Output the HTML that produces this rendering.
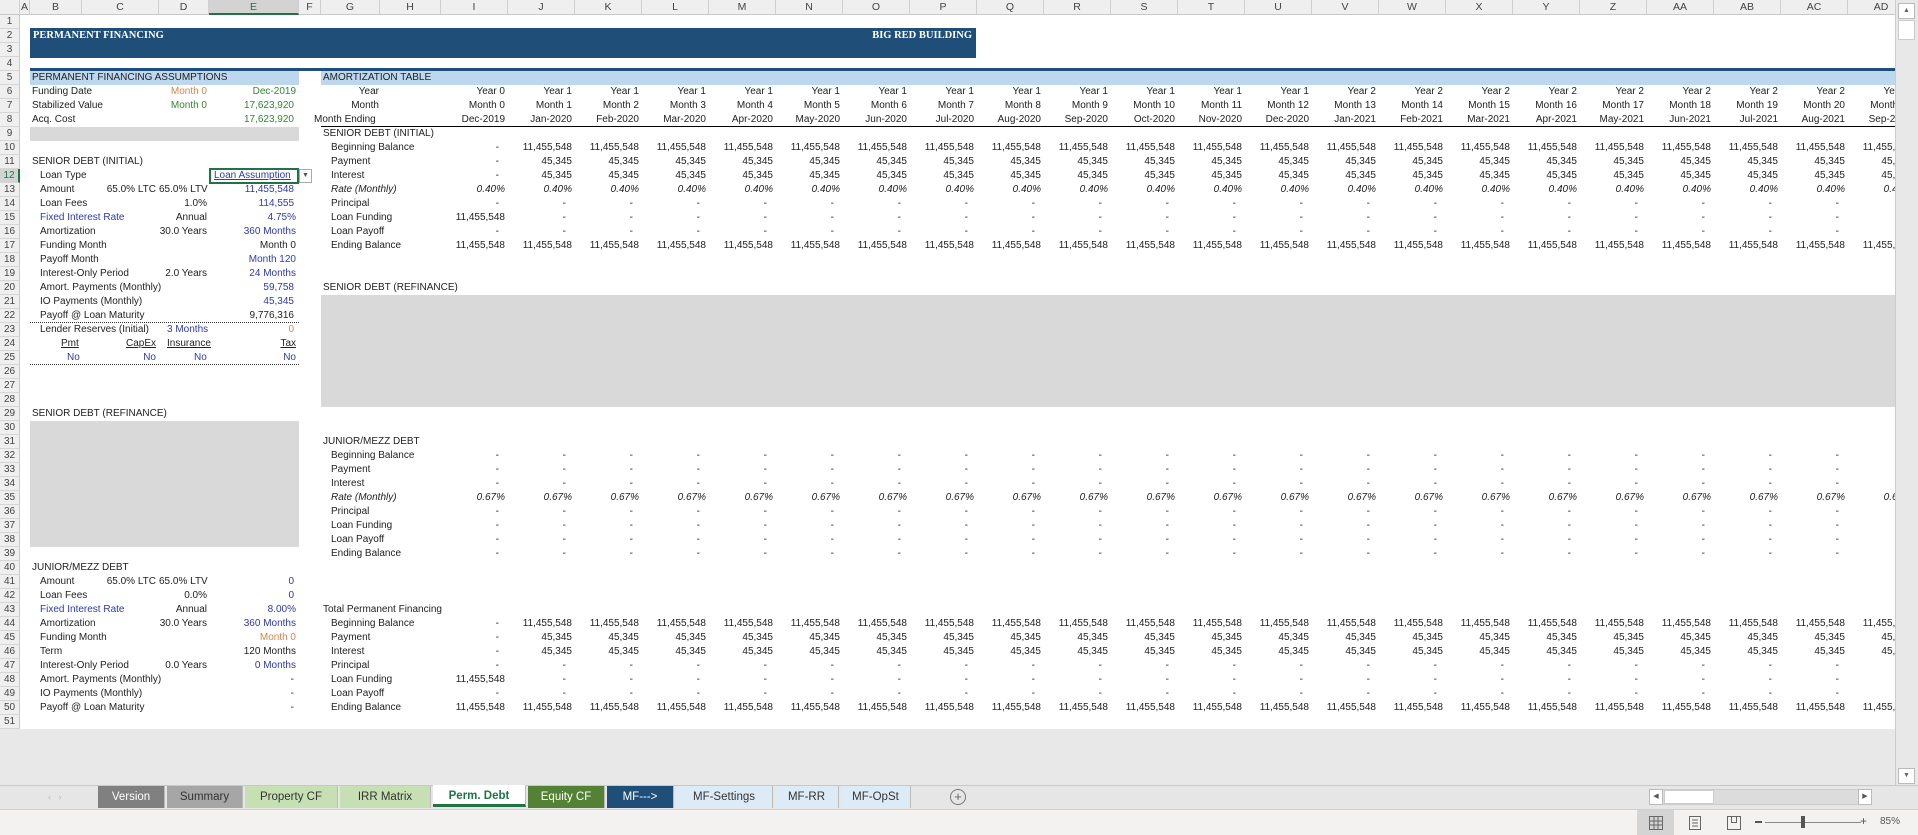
<!DOCTYPE html>
<html><head><meta charset="utf-8"><style>
*{margin:0;padding:0;box-sizing:border-box}
body{width:1918px;height:835px;overflow:hidden;background:#fff;font-family:"Liberation Sans",sans-serif;font-size:10px;color:#222;position:relative}
.a{position:absolute;white-space:nowrap;line-height:14px;height:14px}
.r{text-align:right}
.bl{color:#2e3ba8}.gr{color:#2f8a2f}.or{color:#d4884a}
.hdr{position:absolute;top:0;left:0;width:1897px;height:15px;background:#efefef;border-bottom:1px solid #c8c8c8}
.hdr div{position:absolute;top:0;height:15px;line-height:15px;text-align:center;color:#444;border-right:1px solid #d0d0d0;font-size:10.5px}
.rn{position:absolute;left:0;width:20px;height:14px;line-height:14px;text-align:center;background:#efefef;border-bottom:1px solid #d6d6d6;border-right:1px solid #c8c8c8;color:#444;font-size:10px}
table{position:absolute;left:321px;top:85px;border-collapse:collapse;table-layout:fixed;width:1594px}
tr{height:14px}
td{height:14px;line-height:14px;padding:0 3px 0 0;text-align:right;white-space:nowrap;overflow:hidden;font-size:10px}
td.l{text-align:left;padding-left:10px}
td.s{text-align:left;padding-left:2px}
td.d{padding-right:9px}
td i{font-style:italic}
.wrap{position:absolute;left:0;top:0;width:1895px;height:729px;overflow:hidden}
.tab{position:absolute;top:786px;height:22px;line-height:22px;text-align:center;font-size:11.5px;border-right:1px solid #bbb}
</style></head><body>
<div class="wrap">
<div style="position:absolute;left:30px;top:28px;width:946px;height:30px;background:#1f4e79"></div>
<div class="a" style="left:33px;top:29px;color:#fff;font-family:'Liberation Serif',serif;font-weight:bold;font-size:10.5px">PERMANENT FINANCING</div>
<div class="a r" style="left:700px;width:272px;top:29px;color:#fff;font-family:'Liberation Serif',serif;font-weight:bold;font-size:10.5px">BIG RED BUILDING</div>
<div style="position:absolute;left:30px;top:68px;width:1865px;height:3px;background:#1f4e79"></div>
<div style="position:absolute;left:30px;top:71px;width:269px;height:14px;background:#bdd7ee"></div>
<div style="position:absolute;left:321px;top:71px;width:1574px;height:14px;background:#bdd7ee"></div>
<div class="a" style="left:32px;top:71px">PERMANENT FINANCING ASSUMPTIONS</div>
<div class="a" style="left:323px;top:71px">AMORTIZATION TABLE</div>
<div style="position:absolute;left:30px;top:127px;width:269px;height:14px;background:#d9d9d9"></div>
<div style="position:absolute;left:30px;top:421px;width:269px;height:126px;background:#d9d9d9"></div>
<div style="position:absolute;left:321px;top:295px;width:1574px;height:112px;background:#d9d9d9"></div>
<div style="position:absolute;left:321px;top:126px;width:1574px;height:1px;background:#000"></div>
<div style="position:absolute;left:30px;top:322px;width:269px;border-top:1px dotted #333"></div>
<div style="position:absolute;left:30px;top:364px;width:269px;border-top:1px dotted #333"></div>

<div class="a" style="left:32px;top:85px">Funding Date</div><div class="a r or" style="left:159px;width:48px;top:85px">Month 0</div><div class="a r gr" style="left:209px;width:87px;top:85px">Dec-2019</div>
<div class="a" style="left:32px;top:99px">Stabilized Value</div><div class="a r gr" style="left:159px;width:48px;top:99px">Month 0</div><div class="a r gr" style="left:209px;width:85px;top:99px">17,623,920</div>
<div class="a" style="left:32px;top:113px">Acq. Cost</div><div class="a r gr" style="left:209px;width:85px;top:113px">17,623,920</div>

<div class="a" style="left:32px;top:155px">SENIOR DEBT (INITIAL)</div>
<div class="a" style="left:40px;top:169px">Loan Type</div>
<div style="position:absolute;left:209px;top:168px;width:90px;height:16px;border:2px solid #217346"></div>
<div class="a bl" style="left:214px;top:169px;text-decoration:underline">Loan Assumption</div>
<div style="position:absolute;left:299px;top:169px;width:13px;height:14px;border:1px solid #aaa;background:#fff;font-size:7px;text-align:center;line-height:12px;color:#555">▼</div>
<div class="a" style="left:40px;top:183px">Amount</div><div class="a r" style="left:82px;width:74px;top:183px">65.0% LTC</div><div class="a r" style="left:159px;width:48px;top:183px">65.0% LTV</div><div class="a r bl" style="left:209px;width:85px;top:183px">11,455,548</div>
<div class="a" style="left:40px;top:197px">Loan Fees</div><div class="a r" style="left:159px;width:48px;top:197px">1.0%</div><div class="a r bl" style="left:209px;width:85px;top:197px">114,555</div>
<div class="a bl" style="left:40px;top:211px">Fixed Interest Rate</div><div class="a r" style="left:159px;width:48px;top:211px">Annual</div><div class="a r bl" style="left:209px;width:87px;top:211px">4.75%</div>
<div class="a" style="left:40px;top:225px">Amortization</div><div class="a r" style="left:150px;width:57px;top:225px">30.0 Years</div><div class="a r bl" style="left:209px;width:87px;top:225px">360 Months</div>
<div class="a" style="left:40px;top:239px">Funding Month</div><div class="a r" style="left:209px;width:87px;top:239px">Month 0</div>
<div class="a" style="left:40px;top:253px">Payoff Month</div><div class="a r bl" style="left:209px;width:87px;top:253px">Month 120</div>
<div class="a" style="left:40px;top:267px">Interest-Only Period</div><div class="a r" style="left:150px;width:57px;top:267px">2.0 Years</div><div class="a r bl" style="left:209px;width:87px;top:267px">24 Months</div>
<div class="a" style="left:40px;top:281px">Amort. Payments (Monthly)</div><div class="a r bl" style="left:209px;width:85px;top:281px">59,758</div>
<div class="a" style="left:40px;top:295px">IO Payments (Monthly)</div><div class="a r bl" style="left:209px;width:85px;top:295px">45,345</div>
<div class="a" style="left:40px;top:309px">Payoff @ Loan Maturity</div><div class="a r" style="left:209px;width:85px;top:309px">9,776,316</div>
<div class="a" style="left:40px;top:323px">Lender Reserves (Initial)</div><div class="a bl" style="left:167px;top:323px">3 Months</div><div class="a r or" style="left:209px;width:85px;top:323px">0</div>
<div class="a" style="left:61px;top:337px;text-decoration:underline">Pmt</div><div class="a r" style="left:82px;width:74px;top:337px;text-decoration:underline">CapEx</div><div class="a" style="left:167px;top:337px;text-decoration:underline">Insurance</div><div class="a r" style="left:209px;width:87px;top:337px;text-decoration:underline">Tax</div>
<div class="a bl" style="left:67px;top:351px">No</div><div class="a r bl" style="left:82px;width:74px;top:351px">No</div><div class="a bl" style="left:194px;top:351px">No</div><div class="a r bl" style="left:209px;width:87px;top:351px">No</div>

<div class="a" style="left:32px;top:407px">SENIOR DEBT (REFINANCE)</div>

<div class="a" style="left:32px;top:561px">JUNIOR/MEZZ DEBT</div>
<div class="a" style="left:40px;top:575px">Amount</div><div class="a r" style="left:82px;width:74px;top:575px">65.0% LTC</div><div class="a r" style="left:159px;width:48px;top:575px">65.0% LTV</div><div class="a r bl" style="left:209px;width:85px;top:575px">0</div>
<div class="a" style="left:40px;top:589px">Loan Fees</div><div class="a r" style="left:159px;width:48px;top:589px">0.0%</div><div class="a r bl" style="left:209px;width:85px;top:589px">0</div>
<div class="a bl" style="left:40px;top:603px">Fixed Interest Rate</div><div class="a r" style="left:159px;width:48px;top:603px">Annual</div><div class="a r bl" style="left:209px;width:87px;top:603px">8.00%</div>
<div class="a" style="left:40px;top:617px">Amortization</div><div class="a r" style="left:150px;width:57px;top:617px">30.0 Years</div><div class="a r bl" style="left:209px;width:87px;top:617px">360 Months</div>
<div class="a" style="left:40px;top:631px">Funding Month</div><div class="a r or" style="left:209px;width:87px;top:631px">Month 0</div>
<div class="a" style="left:40px;top:645px">Term</div><div class="a r" style="left:209px;width:87px;top:645px">120 Months</div>
<div class="a" style="left:40px;top:659px">Interest-Only Period</div><div class="a r" style="left:150px;width:57px;top:659px">0.0 Years</div><div class="a r bl" style="left:209px;width:87px;top:659px">0 Months</div>
<div class="a" style="left:40px;top:673px">Amort. Payments (Monthly)</div><div class="a r" style="left:209px;width:85px;top:673px">-</div>
<div class="a" style="left:40px;top:687px">IO Payments (Monthly)</div><div class="a r" style="left:209px;width:85px;top:687px">-</div>
<div class="a" style="left:40px;top:701px">Payoff @ Loan Maturity</div><div class="a r" style="left:209px;width:85px;top:701px">-</div>

<table>
<colgroup><col style="width:120px"><col span="22" style="width:67px"></colgroup>
<tr><td style="padding-right:62px">Year</td><td>Year 0</td><td>Year 1</td><td>Year 1</td><td>Year 1</td><td>Year 1</td><td>Year 1</td><td>Year 1</td><td>Year 1</td><td>Year 1</td><td>Year 1</td><td>Year 1</td><td>Year 1</td><td>Year 1</td><td>Year 2</td><td>Year 2</td><td>Year 2</td><td>Year 2</td><td>Year 2</td><td>Year 2</td><td>Year 2</td><td>Year 2</td><td>Year 2</td></tr>
<tr><td style="padding-right:62px">Month</td><td>Month 0</td><td>Month 1</td><td>Month 2</td><td>Month 3</td><td>Month 4</td><td>Month 5</td><td>Month 6</td><td>Month 7</td><td>Month 8</td><td>Month 9</td><td>Month 10</td><td>Month 11</td><td>Month 12</td><td>Month 13</td><td>Month 14</td><td>Month 15</td><td>Month 16</td><td>Month 17</td><td>Month 18</td><td>Month 19</td><td>Month 20</td><td>Month 21</td></tr>
<tr><td style="text-align:left;padding-left:0;overflow:visible">&#8203;<span style="position:relative;left:-7px">Month Ending</span></td><td>Dec-2019</td><td>Jan-2020</td><td>Feb-2020</td><td>Mar-2020</td><td>Apr-2020</td><td>May-2020</td><td>Jun-2020</td><td>Jul-2020</td><td>Aug-2020</td><td>Sep-2020</td><td>Oct-2020</td><td>Nov-2020</td><td>Dec-2020</td><td>Jan-2021</td><td>Feb-2021</td><td>Mar-2021</td><td>Apr-2021</td><td>May-2021</td><td>Jun-2021</td><td>Jul-2021</td><td>Aug-2021</td><td>Sep-2021</td></tr>
<tr><td class="s">SENIOR DEBT (INITIAL)</td><td colspan="22"></td></tr>
<tr><td class="l">Beginning Balance</td><td class="d">-</td><td>11,455,548</td><td>11,455,548</td><td>11,455,548</td><td>11,455,548</td><td>11,455,548</td><td>11,455,548</td><td>11,455,548</td><td>11,455,548</td><td>11,455,548</td><td>11,455,548</td><td>11,455,548</td><td>11,455,548</td><td>11,455,548</td><td>11,455,548</td><td>11,455,548</td><td>11,455,548</td><td>11,455,548</td><td>11,455,548</td><td>11,455,548</td><td>11,455,548</td><td>11,455,548</td></tr>
<tr><td class="l">Payment</td><td class="d">-</td><td>45,345</td><td>45,345</td><td>45,345</td><td>45,345</td><td>45,345</td><td>45,345</td><td>45,345</td><td>45,345</td><td>45,345</td><td>45,345</td><td>45,345</td><td>45,345</td><td>45,345</td><td>45,345</td><td>45,345</td><td>45,345</td><td>45,345</td><td>45,345</td><td>45,345</td><td>45,345</td><td>45,345</td></tr>
<tr><td class="l">Interest</td><td class="d">-</td><td>45,345</td><td>45,345</td><td>45,345</td><td>45,345</td><td>45,345</td><td>45,345</td><td>45,345</td><td>45,345</td><td>45,345</td><td>45,345</td><td>45,345</td><td>45,345</td><td>45,345</td><td>45,345</td><td>45,345</td><td>45,345</td><td>45,345</td><td>45,345</td><td>45,345</td><td>45,345</td><td>45,345</td></tr>
<tr><td class="l"><i>Rate (Monthly)</i></td><td><i>0.40%</i></td><td><i>0.40%</i></td><td><i>0.40%</i></td><td><i>0.40%</i></td><td><i>0.40%</i></td><td><i>0.40%</i></td><td><i>0.40%</i></td><td><i>0.40%</i></td><td><i>0.40%</i></td><td><i>0.40%</i></td><td><i>0.40%</i></td><td><i>0.40%</i></td><td><i>0.40%</i></td><td><i>0.40%</i></td><td><i>0.40%</i></td><td><i>0.40%</i></td><td><i>0.40%</i></td><td><i>0.40%</i></td><td><i>0.40%</i></td><td><i>0.40%</i></td><td><i>0.40%</i></td><td><i>0.40%</i></td></tr>
<tr><td class="l">Principal</td><td class="d">-</td><td class="d">-</td><td class="d">-</td><td class="d">-</td><td class="d">-</td><td class="d">-</td><td class="d">-</td><td class="d">-</td><td class="d">-</td><td class="d">-</td><td class="d">-</td><td class="d">-</td><td class="d">-</td><td class="d">-</td><td class="d">-</td><td class="d">-</td><td class="d">-</td><td class="d">-</td><td class="d">-</td><td class="d">-</td><td class="d">-</td><td class="d">-</td></tr>
<tr><td class="l">Loan Funding</td><td>11,455,548</td><td class="d">-</td><td class="d">-</td><td class="d">-</td><td class="d">-</td><td class="d">-</td><td class="d">-</td><td class="d">-</td><td class="d">-</td><td class="d">-</td><td class="d">-</td><td class="d">-</td><td class="d">-</td><td class="d">-</td><td class="d">-</td><td class="d">-</td><td class="d">-</td><td class="d">-</td><td class="d">-</td><td class="d">-</td><td class="d">-</td><td class="d">-</td></tr>
<tr><td class="l">Loan Payoff</td><td class="d">-</td><td class="d">-</td><td class="d">-</td><td class="d">-</td><td class="d">-</td><td class="d">-</td><td class="d">-</td><td class="d">-</td><td class="d">-</td><td class="d">-</td><td class="d">-</td><td class="d">-</td><td class="d">-</td><td class="d">-</td><td class="d">-</td><td class="d">-</td><td class="d">-</td><td class="d">-</td><td class="d">-</td><td class="d">-</td><td class="d">-</td><td class="d">-</td></tr>
<tr><td class="l">Ending Balance</td><td>11,455,548</td><td>11,455,548</td><td>11,455,548</td><td>11,455,548</td><td>11,455,548</td><td>11,455,548</td><td>11,455,548</td><td>11,455,548</td><td>11,455,548</td><td>11,455,548</td><td>11,455,548</td><td>11,455,548</td><td>11,455,548</td><td>11,455,548</td><td>11,455,548</td><td>11,455,548</td><td>11,455,548</td><td>11,455,548</td><td>11,455,548</td><td>11,455,548</td><td>11,455,548</td><td>11,455,548</td></tr>
<tr><td colspan="23">&nbsp;</td></tr>
<tr><td colspan="23">&nbsp;</td></tr>
<tr><td class="s" colspan="3">SENIOR DEBT (REFINANCE)</td><td colspan="20"></td></tr>
<tr><td colspan="23">&nbsp;</td></tr><tr><td colspan="23">&nbsp;</td></tr><tr><td colspan="23">&nbsp;</td></tr><tr><td colspan="23">&nbsp;</td></tr><tr><td colspan="23">&nbsp;</td></tr><tr><td colspan="23">&nbsp;</td></tr><tr><td colspan="23">&nbsp;</td></tr><tr><td colspan="23">&nbsp;</td></tr>
<tr><td colspan="23">&nbsp;</td></tr><tr><td colspan="23">&nbsp;</td></tr>
<tr><td class="s">JUNIOR/MEZZ DEBT</td><td colspan="22"></td></tr>
<tr><td class="l">Beginning Balance</td><td class="d">-</td><td class="d">-</td><td class="d">-</td><td class="d">-</td><td class="d">-</td><td class="d">-</td><td class="d">-</td><td class="d">-</td><td class="d">-</td><td class="d">-</td><td class="d">-</td><td class="d">-</td><td class="d">-</td><td class="d">-</td><td class="d">-</td><td class="d">-</td><td class="d">-</td><td class="d">-</td><td class="d">-</td><td class="d">-</td><td class="d">-</td><td class="d">-</td></tr>
<tr><td class="l">Payment</td><td class="d">-</td><td class="d">-</td><td class="d">-</td><td class="d">-</td><td class="d">-</td><td class="d">-</td><td class="d">-</td><td class="d">-</td><td class="d">-</td><td class="d">-</td><td class="d">-</td><td class="d">-</td><td class="d">-</td><td class="d">-</td><td class="d">-</td><td class="d">-</td><td class="d">-</td><td class="d">-</td><td class="d">-</td><td class="d">-</td><td class="d">-</td><td class="d">-</td></tr>
<tr><td class="l">Interest</td><td class="d">-</td><td class="d">-</td><td class="d">-</td><td class="d">-</td><td class="d">-</td><td class="d">-</td><td class="d">-</td><td class="d">-</td><td class="d">-</td><td class="d">-</td><td class="d">-</td><td class="d">-</td><td class="d">-</td><td class="d">-</td><td class="d">-</td><td class="d">-</td><td class="d">-</td><td class="d">-</td><td class="d">-</td><td class="d">-</td><td class="d">-</td><td class="d">-</td></tr>
<tr><td class="l"><i>Rate (Monthly)</i></td><td><i>0.67%</i></td><td><i>0.67%</i></td><td><i>0.67%</i></td><td><i>0.67%</i></td><td><i>0.67%</i></td><td><i>0.67%</i></td><td><i>0.67%</i></td><td><i>0.67%</i></td><td><i>0.67%</i></td><td><i>0.67%</i></td><td><i>0.67%</i></td><td><i>0.67%</i></td><td><i>0.67%</i></td><td><i>0.67%</i></td><td><i>0.67%</i></td><td><i>0.67%</i></td><td><i>0.67%</i></td><td><i>0.67%</i></td><td><i>0.67%</i></td><td><i>0.67%</i></td><td><i>0.67%</i></td><td><i>0.67%</i></td></tr>
<tr><td class="l">Principal</td><td class="d">-</td><td class="d">-</td><td class="d">-</td><td class="d">-</td><td class="d">-</td><td class="d">-</td><td class="d">-</td><td class="d">-</td><td class="d">-</td><td class="d">-</td><td class="d">-</td><td class="d">-</td><td class="d">-</td><td class="d">-</td><td class="d">-</td><td class="d">-</td><td class="d">-</td><td class="d">-</td><td class="d">-</td><td class="d">-</td><td class="d">-</td><td class="d">-</td></tr>
<tr><td class="l">Loan Funding</td><td class="d">-</td><td class="d">-</td><td class="d">-</td><td class="d">-</td><td class="d">-</td><td class="d">-</td><td class="d">-</td><td class="d">-</td><td class="d">-</td><td class="d">-</td><td class="d">-</td><td class="d">-</td><td class="d">-</td><td class="d">-</td><td class="d">-</td><td class="d">-</td><td class="d">-</td><td class="d">-</td><td class="d">-</td><td class="d">-</td><td class="d">-</td><td class="d">-</td></tr>
<tr><td class="l">Loan Payoff</td><td class="d">-</td><td class="d">-</td><td class="d">-</td><td class="d">-</td><td class="d">-</td><td class="d">-</td><td class="d">-</td><td class="d">-</td><td class="d">-</td><td class="d">-</td><td class="d">-</td><td class="d">-</td><td class="d">-</td><td class="d">-</td><td class="d">-</td><td class="d">-</td><td class="d">-</td><td class="d">-</td><td class="d">-</td><td class="d">-</td><td class="d">-</td><td class="d">-</td></tr>
<tr><td class="l">Ending Balance</td><td class="d">-</td><td class="d">-</td><td class="d">-</td><td class="d">-</td><td class="d">-</td><td class="d">-</td><td class="d">-</td><td class="d">-</td><td class="d">-</td><td class="d">-</td><td class="d">-</td><td class="d">-</td><td class="d">-</td><td class="d">-</td><td class="d">-</td><td class="d">-</td><td class="d">-</td><td class="d">-</td><td class="d">-</td><td class="d">-</td><td class="d">-</td><td class="d">-</td></tr>
<tr><td colspan="23">&nbsp;</td></tr><tr><td colspan="23">&nbsp;</td></tr><tr><td colspan="23">&nbsp;</td></tr>
<tr><td class="s" colspan="3">Total Permanent Financing</td><td colspan="20"></td></tr>
<tr><td class="l">Beginning Balance</td><td class="d">-</td><td>11,455,548</td><td>11,455,548</td><td>11,455,548</td><td>11,455,548</td><td>11,455,548</td><td>11,455,548</td><td>11,455,548</td><td>11,455,548</td><td>11,455,548</td><td>11,455,548</td><td>11,455,548</td><td>11,455,548</td><td>11,455,548</td><td>11,455,548</td><td>11,455,548</td><td>11,455,548</td><td>11,455,548</td><td>11,455,548</td><td>11,455,548</td><td>11,455,548</td><td>11,455,548</td></tr>
<tr><td class="l">Payment</td><td class="d">-</td><td>45,345</td><td>45,345</td><td>45,345</td><td>45,345</td><td>45,345</td><td>45,345</td><td>45,345</td><td>45,345</td><td>45,345</td><td>45,345</td><td>45,345</td><td>45,345</td><td>45,345</td><td>45,345</td><td>45,345</td><td>45,345</td><td>45,345</td><td>45,345</td><td>45,345</td><td>45,345</td><td>45,345</td></tr>
<tr><td class="l">Interest</td><td class="d">-</td><td>45,345</td><td>45,345</td><td>45,345</td><td>45,345</td><td>45,345</td><td>45,345</td><td>45,345</td><td>45,345</td><td>45,345</td><td>45,345</td><td>45,345</td><td>45,345</td><td>45,345</td><td>45,345</td><td>45,345</td><td>45,345</td><td>45,345</td><td>45,345</td><td>45,345</td><td>45,345</td><td>45,345</td></tr>
<tr><td class="l">Principal</td><td class="d">-</td><td class="d">-</td><td class="d">-</td><td class="d">-</td><td class="d">-</td><td class="d">-</td><td class="d">-</td><td class="d">-</td><td class="d">-</td><td class="d">-</td><td class="d">-</td><td class="d">-</td><td class="d">-</td><td class="d">-</td><td class="d">-</td><td class="d">-</td><td class="d">-</td><td class="d">-</td><td class="d">-</td><td class="d">-</td><td class="d">-</td><td class="d">-</td></tr>
<tr><td class="l">Loan Funding</td><td>11,455,548</td><td class="d">-</td><td class="d">-</td><td class="d">-</td><td class="d">-</td><td class="d">-</td><td class="d">-</td><td class="d">-</td><td class="d">-</td><td class="d">-</td><td class="d">-</td><td class="d">-</td><td class="d">-</td><td class="d">-</td><td class="d">-</td><td class="d">-</td><td class="d">-</td><td class="d">-</td><td class="d">-</td><td class="d">-</td><td class="d">-</td><td class="d">-</td></tr>
<tr><td class="l">Loan Payoff</td><td class="d">-</td><td class="d">-</td><td class="d">-</td><td class="d">-</td><td class="d">-</td><td class="d">-</td><td class="d">-</td><td class="d">-</td><td class="d">-</td><td class="d">-</td><td class="d">-</td><td class="d">-</td><td class="d">-</td><td class="d">-</td><td class="d">-</td><td class="d">-</td><td class="d">-</td><td class="d">-</td><td class="d">-</td><td class="d">-</td><td class="d">-</td><td class="d">-</td></tr>
<tr><td class="l">Ending Balance</td><td>11,455,548</td><td>11,455,548</td><td>11,455,548</td><td>11,455,548</td><td>11,455,548</td><td>11,455,548</td><td>11,455,548</td><td>11,455,548</td><td>11,455,548</td><td>11,455,548</td><td>11,455,548</td><td>11,455,548</td><td>11,455,548</td><td>11,455,548</td><td>11,455,548</td><td>11,455,548</td><td>11,455,548</td><td>11,455,548</td><td>11,455,548</td><td>11,455,548</td><td>11,455,548</td><td>11,455,548</td></tr>
</table>

<div class="hdr">
<div style="left:0;width:20px"></div>
<div style="left:20px;width:10px">A</div><div style="left:30px;width:52px">B</div><div style="left:82px;width:77px">C</div><div style="left:159px;width:50px">D</div>
<div style="left:209px;width:90px;background:#d3d3d3;border-bottom:2px solid #217346;color:#217346">E</div>
<div style="left:299px;width:22px">F</div><div style="left:321px;width:59px">G</div><div style="left:380px;width:61px">H</div>
<div style="left:441px;width:67px">I</div><div style="left:508px;width:67px">J</div><div style="left:575px;width:67px">K</div><div style="left:642px;width:67px">L</div><div style="left:709px;width:67px">M</div><div style="left:776px;width:67px">N</div><div style="left:843px;width:67px">O</div><div style="left:910px;width:67px">P</div><div style="left:977px;width:67px">Q</div><div style="left:1044px;width:67px">R</div><div style="left:1111px;width:67px">S</div><div style="left:1178px;width:67px">T</div><div style="left:1245px;width:67px">U</div><div style="left:1312px;width:67px">V</div><div style="left:1379px;width:67px">W</div><div style="left:1446px;width:67px">X</div><div style="left:1513px;width:67px">Y</div><div style="left:1580px;width:67px">Z</div><div style="left:1647px;width:67px">AA</div><div style="left:1714px;width:67px">AB</div><div style="left:1781px;width:67px">AC</div><div style="left:1848px;width:67px">AD</div>
</div>
<div class="rn" style="top:15px">1</div><div class="rn" style="top:29px">2</div><div class="rn" style="top:43px">3</div><div class="rn" style="top:57px">4</div><div class="rn" style="top:71px">5</div><div class="rn" style="top:85px">6</div><div class="rn" style="top:99px">7</div><div class="rn" style="top:113px">8</div><div class="rn" style="top:127px">9</div><div class="rn" style="top:141px">10</div><div class="rn" style="top:155px">11</div><div class="rn" style="top:169px;background:#d3d3d3;color:#217346;border-right:2px solid #217346">12</div><div class="rn" style="top:183px">13</div><div class="rn" style="top:197px">14</div><div class="rn" style="top:211px">15</div><div class="rn" style="top:225px">16</div><div class="rn" style="top:239px">17</div><div class="rn" style="top:253px">18</div><div class="rn" style="top:267px">19</div><div class="rn" style="top:281px">20</div><div class="rn" style="top:295px">21</div><div class="rn" style="top:309px">22</div><div class="rn" style="top:323px">23</div><div class="rn" style="top:337px">24</div><div class="rn" style="top:351px">25</div><div class="rn" style="top:365px">26</div><div class="rn" style="top:379px">27</div><div class="rn" style="top:393px">28</div><div class="rn" style="top:407px">29</div><div class="rn" style="top:421px">30</div><div class="rn" style="top:435px">31</div><div class="rn" style="top:449px">32</div><div class="rn" style="top:463px">33</div><div class="rn" style="top:477px">34</div><div class="rn" style="top:491px">35</div><div class="rn" style="top:505px">36</div><div class="rn" style="top:519px">37</div><div class="rn" style="top:533px">38</div><div class="rn" style="top:547px">39</div><div class="rn" style="top:561px">40</div><div class="rn" style="top:575px">41</div><div class="rn" style="top:589px">42</div><div class="rn" style="top:603px">43</div><div class="rn" style="top:617px">44</div><div class="rn" style="top:631px">45</div><div class="rn" style="top:645px">46</div><div class="rn" style="top:659px">47</div><div class="rn" style="top:673px">48</div><div class="rn" style="top:687px">49</div><div class="rn" style="top:701px">50</div><div class="rn" style="top:715px">51</div>
</div>

<div style="position:absolute;left:1895px;top:0;width:23px;height:786px;background:#e8e8e8;border-left:1px solid #ccc"></div>
<div style="position:absolute;left:1898px;top:3px;width:17px;height:16px;background:#fff;border:1px solid #bbb;font-size:7px;text-align:center;line-height:14px;color:#666">▲</div>
<div style="position:absolute;left:1898px;top:20px;width:17px;height:20px;background:#fff;border:1px solid #ccc"></div>
<div style="position:absolute;left:1898px;top:768px;width:17px;height:16px;background:#fff;border:1px solid #bbb;font-size:7px;text-align:center;line-height:14px;color:#666">▼</div>

<div style="position:absolute;left:0;top:729px;width:1895px;height:57px;background:#e8e8e8"></div>
<div style="position:absolute;left:0;top:785px;width:1918px;height:24px;background:#e6e6e6;border-top:1px solid #c8c8c8"></div>
<div class="a" style="left:48px;top:790px;color:#bbb;font-size:9px">‹ &nbsp; ›</div>
<div class="tab" style="left:98px;width:67px;background:#808080;color:#fff">Version</div>
<div class="tab" style="left:167px;width:76px;background:#a6a6a6;color:#333">Summary</div>
<div class="tab" style="left:245px;width:93px;background:#c6e0b4;color:#333">Property CF</div>
<div class="tab" style="left:340px;width:91px;background:#c6e0b4;color:#333">IRR Matrix</div>
<div class="tab" style="left:433px;width:93px;background:#fff;color:#217346;font-weight:bold;border-bottom:3px solid #217346;top:785px">Perm. Debt</div>
<div class="tab" style="left:528px;width:77px;background:#548235;color:#fff">Equity CF</div>
<div class="tab" style="left:607px;width:67px;background:#1f4e79;color:#fff">MF---&gt;</div>
<div class="tab" style="left:676px;width:97px;background:#ddebf7;color:#333">MF-Settings</div>
<div class="tab" style="left:775px;width:64px;background:#ddebf7;color:#333">MF-RR</div>
<div class="tab" style="left:841px;width:70px;background:#ddebf7;color:#333">MF-OpSt</div>
<div style="position:absolute;left:950px;top:789px;width:16px;height:16px;border:1px solid #777;border-radius:50%;text-align:center;line-height:13px;font-size:13px;color:#666">+</div>
<div style="position:absolute;left:1649px;top:789px;width:223px;height:16px;background:#dcdcdc;border:1px solid #ccc"></div>
<div style="position:absolute;left:1649px;top:789px;width:14px;height:16px;background:#fff;border:1px solid #bbb;font-size:7px;text-align:center;line-height:14px;color:#555">◀</div>
<div style="position:absolute;left:1664px;top:790px;width:50px;height:14px;background:#fff;border:1px solid #ccc"></div>
<div style="position:absolute;left:1858px;top:789px;width:14px;height:16px;background:#fff;border:1px solid #bbb;font-size:7px;text-align:center;line-height:14px;color:#555">▶</div>
<div style="position:absolute;left:0;top:809px;width:1918px;height:26px;background:#f3f2f1;border-top:1px solid #d0d0d0"></div>
<div style="position:absolute;left:1637px;top:810px;width:37px;height:25px;background:#d4d4d4"></div>
<svg style="position:absolute;left:1645px;top:814px" width="130" height="18" viewBox="0 0 130 18" fill="none" stroke="#666" stroke-width="1">
<rect x="4.5" y="2.5" width="13" height="13"/><path d="M4.5 7h13M4.5 11h13M9 2.5v13M13 2.5v13"/>
<rect x="44.5" y="2.5" width="11" height="13"/><path d="M47 6h6M47 9h6M47 12h6"/>
<rect x="82.5" y="2.5" width="13" height="13"/><path d="M86.5 2.5v6h5v-6"/>
</svg>
<div style="position:absolute;left:1755px;top:821px;width:7px;height:2px;background:#555"></div>
<div style="position:absolute;left:1765px;top:822px;width:96px;height:1px;background:#888"></div>
<div style="position:absolute;left:1801px;top:816px;width:4px;height:12px;background:#555"></div>
<div class="a" style="left:1860px;top:814px;font-size:12px;color:#555">+</div>
<div class="a" style="left:1880px;top:815px;color:#555">85%</div>
</body></html>
